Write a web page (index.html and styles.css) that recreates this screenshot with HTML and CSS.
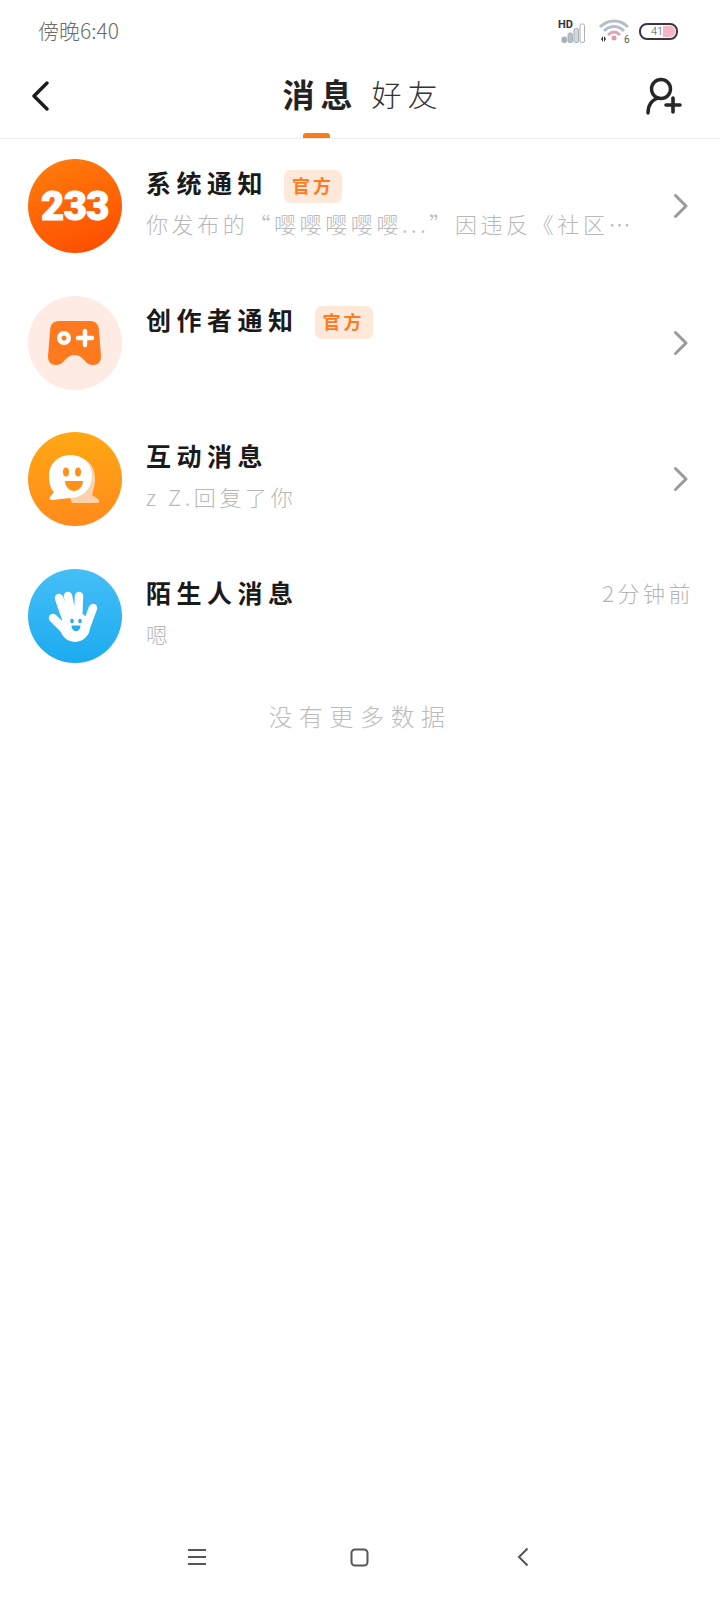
FILE: index.html
```html
<html>
  <head>
    <meta charset="utf-8" />
    <link rel="stylesheet" href="styles.css">
  </head>
  <body>
    <div class="statusBar">
      <span class="statusBar__time">傍晚6:40</span>
      <div class="statusBar__icons">
        <div class="signal">
          <span class="signal__hd">HD</span>
          <svg class="signal__bars" width="28" height="20" viewBox="0 0 28 20"><g fill="#d3d8de" stroke="#a9b0b8" stroke-width="1"><rect x="1" y="14" width="4.500" height="5.500" rx="1.500" fill="#a9b0b8"/><rect x="7" y="10" width="4.500" height="9.500" rx="1.500" fill="#b9bfc6"/><rect x="13" y="5.500" width="4.500" height="14" rx="1.500"/><rect x="19" y="1" width="4.500" height="18.500" rx="1.500" fill="#fff"/></g></svg>
        </div>
        <svg class="wifi" width="32" height="26" viewBox="0 0 32 26">
          <path d="M2 9C10 1 22 1 30 9" fill="none" stroke="#b5bfcc" stroke-width="3"/>
          <path d="M6 13C12 7 20 7 26 13" fill="none" stroke="#b5bfcc" stroke-width="3"/>
          <path d="M10 17C14 13 18 13 22 17" fill="none" stroke="#d9a9b8" stroke-width="3"/>
          <circle cx="16" cy="20" r="2.500" fill="#e59ab2"/>
          <path d="M3 21l2-3v6zM8 21l-2-3v6z" fill="#333"/>
          <text class="wifi__six" x="26" y="25">6</text>
        </svg>
        <div class="battery"><span class="battery__num">41</span><span class="battery__fill"></span></div>
      </div>
    </div>

    <div class="topBar">
      <svg class="topBar__icon" width="20" height="30" viewBox="0 0 20 30"><path d="M17 2L4 15l13 13" fill="none" stroke="#1c1c1c" stroke-width="3.400" stroke-linecap="round" stroke-linejoin="round"/></svg>
      <div class="tabs">
        <span class="tabs__item tabs__item--active">消息</span>
        <span class="tabs__item">好友</span>
      </div>
      <svg class="topBar__icon" width="36" height="38" viewBox="0 0 36 38">
        <circle cx="15" cy="12" r="9.500" fill="none" stroke="#262626" stroke-width="3.400"/>
        <path d="M2 36c0-8 4-13 10-15" fill="none" stroke="#262626" stroke-width="3.400" stroke-linecap="round"/>
        <path d="M27 21v14M20 28h14" fill="none" stroke="#262626" stroke-width="3.600" stroke-linecap="round"/>
      </svg>
    </div>

    <div class="msgList">
      <div class="msgRow">
        <div class="avatar avatar--system"><span class="avatar__num">233</span></div>
        <div class="msgRow__body">
          <div class="msgRow__head"><span class="msgRow__title">系统通知</span><span class="tag">官方</span></div>
          <div class="msgRow__sub">你发布的“嘤嘤嘤嘤嘤...”因违反《社区⋯</div>
        </div>
        <svg class="chevron" width="16" height="26" viewBox="0 0 16 26"><path d="M2.500 2.500L13 13 2.500 23.500" fill="none" stroke="#9a9a9a" stroke-width="3" stroke-linecap="round" stroke-linejoin="round"/></svg>
      </div>

      <div class="msgRow">
        <div class="avatar avatar--creator">
          <svg width="94" height="94" viewBox="0 0 94 94">
            <path d="M31 25H62C68 25 71 29 71 35L73 60C73 66 70 69 65 69C60 69 58 66 55 63C52 60 50 59 46.500 59C43 59 41 60 38 63C35 66 33 69 28 69C23 69 20 66 20 60L22 35C22 29 25 25 31 25Z" fill="#ff7a1f"/>
            <circle cx="36" cy="42" r="7" fill="#fff"/><circle cx="36" cy="42" r="2.500" fill="#ff7a1f"/>
            <path d="M57 35v14M50 42h14" fill="none" stroke="#fff" stroke-width="4.500" stroke-linecap="round"/>
          </svg>
        </div>
        <div class="msgRow__body">
          <div class="msgRow__head"><span class="msgRow__title">创作者通知</span><span class="tag">官方</span></div>
        </div>
        <svg class="chevron" width="16" height="26" viewBox="0 0 16 26"><path d="M2.500 2.500L13 13 2.500 23.500" fill="none" stroke="#9a9a9a" stroke-width="3" stroke-linecap="round" stroke-linejoin="round"/></svg>
      </div>

      <div class="msgRow">
        <div class="avatar avatar--interact">
          <svg width="94" height="94" viewBox="0 0 94 94">
            <path d="M54 26C64 30 68 40 67 50C66 56 65 60 64 63L70 67C72 69 71 71 69 71H44L42 66Z" fill="#fbd3ab"/>
            <path d="M42.500 23C55 23 64 32 64 44C64 56 55 66 42 66L24 68C21 68 21 65 23 64L26 60C22 56 21 50 21 44C21 32 30 23 42.500 23Z" fill="#fff"/>
            <ellipse cx="38" cy="40" rx="3" ry="4.500" fill="#ff9116"/><ellipse cx="50" cy="40" rx="3" ry="4.500" fill="#ff9116"/>
            <path d="M37 49H55C55 55 50 59 46 59S37 55 37 49Z" fill="#ff9116"/>
          </svg>
        </div>
        <div class="msgRow__body">
          <div class="msgRow__head"><span class="msgRow__title">互动消息</span></div>
          <div class="msgRow__sub">z Z.回复了你</div>
        </div>
        <svg class="chevron" width="16" height="26" viewBox="0 0 16 26"><path d="M2.500 2.500L13 13 2.500 23.500" fill="none" stroke="#9a9a9a" stroke-width="3" stroke-linecap="round" stroke-linejoin="round"/></svg>
      </div>

      <div class="msgRow">
        <div class="avatar avatar--stranger">
          <svg width="94" height="94" viewBox="0 0 94 94">
            <g stroke="#fff" stroke-width="8.500" stroke-linecap="round">
              <path d="M25 49L38 62M31 29L40 55M40 27L45 52M51 27L50 52M65 39L58 58"/>
            </g>
            <circle cx="47" cy="58" r="15" fill="#fff"/>
            <ellipse cx="44" cy="52" rx="1.800" ry="2.200" fill="#25aef2"/><ellipse cx="52" cy="52" rx="1.800" ry="2.200" fill="#25aef2"/>
            <path d="M43.500 56.500H52.500C52.500 60 50.500 62 48 62S43.500 60 43.500 56.500Z" fill="#25aef2"/>
          </svg>
        </div>
        <div class="msgRow__body">
          <div class="msgRow__head"><span class="msgRow__title">陌生人消息</span><span class="msgRow__time">2分钟前</span></div>
          <div class="msgRow__sub">嗯</div>
        </div>
      </div>
    </div>

    <div class="noMore">没有更多数据</div>

    <div class="navBar">
      <svg width="20" height="18" viewBox="0 0 20 18"><path d="M1 2h18M1 9h18M1 16h18" fill="none" stroke="#555" stroke-width="2"/></svg>
      <svg width="19" height="19" viewBox="0 0 19 19"><rect x="1.500" y="1.500" width="16" height="16" rx="3.500" fill="none" stroke="#555" stroke-width="2"/></svg>
      <svg width="12" height="20" viewBox="0 0 12 20"><path d="M10.500 1.500L2 10l8.500 8.500" fill="none" stroke="#555" stroke-width="2"/></svg>
    </div>
  </body>
</html>
```

FILE: styles.css
```css
body {
  margin: 0;
  width: 720px;
  height: 1600px;
  display: flex;
  flex-direction: column;
  background-color: #fff;
  font-family: "Noto Sans CJK SC", "Noto Sans", sans-serif;
  overflow: hidden;
}

.statusBar {
  height: 62px;
  display: flex;
  align-items: center;
  justify-content: space-between;
  padding: 0 42px 0 38px;
}

.statusBar__time {
  font-size: 21px;
  font-weight: 300;
  color: #6b6b6b;
  margin-top: -2px;
}

.statusBar__icons {
  display: flex;
  align-items: center;
  gap: 9px;
}

.signal {
  position: relative;
  width: 30px;
  height: 24px;
}

.signal__hd {
  position: absolute;
  top: -1px;
  left: 1px;
  font-family: Roboto, sans-serif;
  font-size: 11px;
  font-weight: 700;
  color: #333;
}

.signal__bars {
  position: absolute;
  right: -2px;
  bottom: 0;
}

.wifi {
  margin-left: 2px;
}

.wifi__six {
  font-family: Roboto, sans-serif;
  font-size: 10px;
  fill: #555;
}

.battery {
  box-sizing: border-box;
  width: 39px;
  height: 17px;
  border: 2px solid #3f3540;
  border-radius: 8px;
  display: flex;
  align-items: center;
  justify-content: space-between;
  padding: 0 1px 0 10px;
}

.battery__num {
  font-family: Roboto, sans-serif;
  font-size: 11px;
  font-weight: 300;
  color: #555;
}

.battery__fill {
  width: 13px;
  height: 11px;
  border-radius: 0 5px 5px 0;
  background-color: #f3b6c8;
}

.topBar {
  height: 77px;
  box-sizing: border-box;
  border-bottom: 1px solid #ececec;
  display: flex;
  align-items: center;
  justify-content: space-between;
  padding: 0 38px 15px 30px;
}

.topBar__icon {
  margin-top: 6px;
}

.tabs {
  display: flex;
  align-items: center;
  gap: 13px;
  margin-left: 30px;
}

.tabs__item {
  position: relative;
  font-size: 30px;
  letter-spacing: 6px;
  font-weight: 300;
  color: #333;
}

.tabs__item--active {
  font-size: 32px;
  font-weight: 700;
  color: #222;
}

/* orange marker sits on the bottom border of the bar */
.tabs__item--active::after {
  content: "";
  position: absolute;
  left: 21px;
  bottom: -22px;
  width: 27px;
  height: 5px;
  border-radius: 3px 3px 0 0;
  background-color: #ff7a14;
}

.msgList {
  padding: 20px 29px 0 28px;
  display: flex;
  flex-direction: column;
  gap: 42.5px;
}

.msgRow {
  display: flex;
  align-items: center;
  height: 94px;
}

.avatar {
  flex: none;
  width: 94px;
  height: 94px;
  border-radius: 50%;
  display: flex;
  align-items: center;
  justify-content: center;
}

.avatar--system {
  background: linear-gradient(160deg, #ff7f0c, #ff4a00);
}

.avatar__num {
  font-family: Roboto, sans-serif;
  font-size: 40px;
  font-weight: 900;
  letter-spacing: -0.5px;
  color: #fff;
  -webkit-text-stroke: 1px #fff;
}

.avatar--creator {
  background-color: #fdebe4;
}

.avatar--interact {
  background: linear-gradient(180deg, #ffa813, #ff8a1c);
}

.avatar--stranger {
  background: linear-gradient(180deg, #45bff6, #1caaf0);
}

.msgRow__body {
  flex: 1;
  min-width: 0;
  align-self: flex-start;
  padding: 4px 0 0 24px;
}

.msgRow__head {
  display: flex;
  align-items: center;
  height: 38px;
}

.msgRow__title {
  font-size: 25px;
  font-weight: 700;
  letter-spacing: 5.500px;
  color: #1a1a1a;
}

.tag {
  margin: 8px 0 0 16px;
  width: 58px;
  height: 33px;
  border-radius: 7px;
  background-color: #fde8da;
  color: #ff7a20;
  font-size: 18px;
  font-weight: 700;
  letter-spacing: 3px;
  text-align: center;
  line-height: 31px;
}

.msgRow__time {
  margin: 0 -3px 0 auto;
  font-size: 22px;
  font-weight: 300;
  letter-spacing: 3.500px;
  color: #b4b4b4;
}

.msgRow__sub {
  margin-top: 6px;
  font-size: 22px;
  font-weight: 300;
  letter-spacing: 3.600px;
  line-height: 32px;
  color: #b8b8b8;
  white-space: nowrap;
}

.chevron {
  flex: none;
  margin: 0 2px 0 12px;
}

.noMore {
  margin-top: 35px;
  text-align: center;
  font-size: 24px;
  font-weight: 300;
  letter-spacing: 6.500px;
  color: #bcbcbc;
}

.navBar {
  margin-top: auto;
  height: 86px;
  padding-left: 115px;
  display: grid;
  grid-template-columns: repeat(3, 163px);
  align-items: center;
  justify-items: center;
}
```
